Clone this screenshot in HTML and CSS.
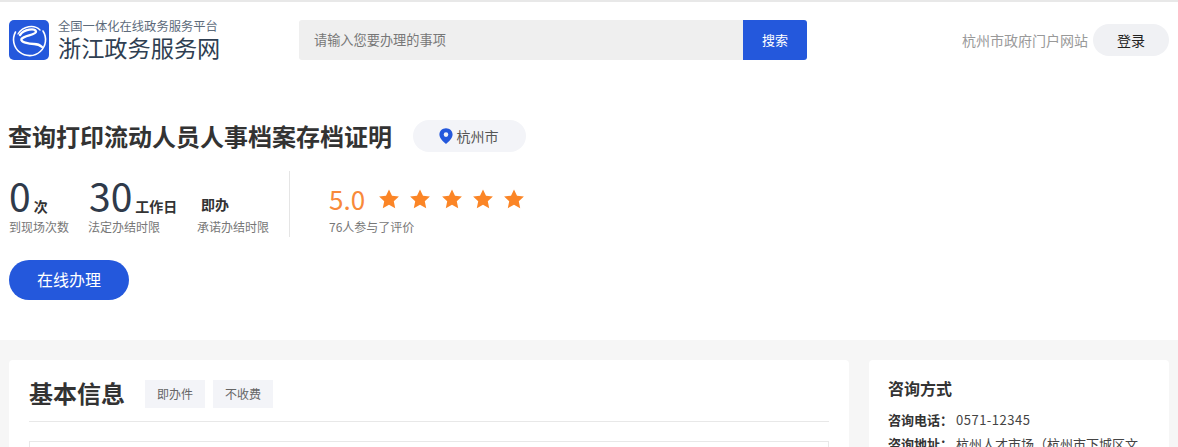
FILE: index.html
```html
<!DOCTYPE html>
<html lang="zh-CN">
<head>
<meta charset="utf-8">
<title>查询打印流动人员人事档案存档证明</title>
<link rel="stylesheet" href="styles.css">
</head>
<body>
<header class="topbar">
  <a class="brand">
    <svg class="brand-logo" viewBox="0 0 40 40" aria-hidden="true">
      <rect width="40" height="40" rx="5" fill="#2458dc"/>
      <path d="M6.500 12A16 16 0 1 0 34 11" fill="none" stroke="#fff" stroke-width="1.600" stroke-linecap="round"/>
      <path d="M9 14C14 6 25 4 31 10" fill="none" stroke="#fff" stroke-width="1.400" stroke-linecap="round"/>
      <path d="M11 15C15 9 26 8 27 11.500C27.500 15 15 15.500 12.500 19C11 22 20 24 25 24C29 24 31 25 33 27" fill="none" stroke="#fff" stroke-width="2.400" stroke-linecap="round" stroke-linejoin="round"/>
    </svg>
    <span class="brand-text">
      <span class="brand-sub">全国一体化在线政务服务平台</span>
      <span class="brand-name">浙江政务服务网</span>
    </span>
  </a>
  <form class="search">
    <span class="search-input">请输入您要办理的事项</span>
    <span class="search-btn">搜索</span>
  </form>
  <div class="top-right">
    <span class="portal">杭州市政府门户网站</span>
    <span class="login">登录</span>
  </div>
</header>

<section class="hero">
  <div class="title-row">
    <h1 class="title">查询打印流动人员人事档案存档证明</h1>
    <span class="city">
      <svg class="pin" viewBox="0 0 14 16" aria-hidden="true">
        <path fill-rule="evenodd" d="M7 0.300C3.200 0.300 0.400 3.100 0.400 6.500C0.400 10 4.200 13.800 7 16C9.800 13.800 13.600 10 13.600 6.500C13.600 3.100 10.800 0.300 7 0.300ZM7 4.300A2.300 2.300 0 1 1 7 8.900A2.300 2.300 0 1 1 7 4.300Z" fill="#2458dc"/>
      </svg>
      杭州市
    </span>
  </div>
  <div class="stats">
    <div class="stat stat-visits">
      <div class="stat-value"><span class="num">0</span><span class="unit">次</span></div>
      <div class="stat-label">到现场次数</div>
    </div>
    <div class="stat stat-legal">
      <div class="stat-value"><span class="num">30</span><span class="unit">工作日</span></div>
      <div class="stat-label">法定办结时限</div>
    </div>
    <div class="stat stat-promise">
      <div class="stat-value"><span class="unit unit-solo">即办</span></div>
      <div class="stat-label">承诺办结时限</div>
    </div>
    <div class="rating">
      <div class="rating-top">
        <span class="score">5.0</span>
        <span class="stars">
          <svg class="star" viewBox="0 0 20 20"><path d="M10 .4l3 6.300 6.900.9-5.100 4.700 1.400 6.900L10 15.800l-6.200 3.400 1.400-6.900L.1 7.600 7 6.700z"/></svg>
          <svg class="star" viewBox="0 0 20 20"><path d="M10 .4l3 6.300 6.900.9-5.100 4.700 1.400 6.900L10 15.800l-6.200 3.400 1.400-6.900L.1 7.600 7 6.700z"/></svg>
          <svg class="star" viewBox="0 0 20 20"><path d="M10 .4l3 6.300 6.900.9-5.100 4.700 1.400 6.900L10 15.800l-6.200 3.400 1.400-6.900L.1 7.600 7 6.700z"/></svg>
          <svg class="star" viewBox="0 0 20 20"><path d="M10 .4l3 6.300 6.900.9-5.100 4.700 1.400 6.900L10 15.800l-6.200 3.400 1.400-6.900L.1 7.600 7 6.700z"/></svg>
          <svg class="star" viewBox="0 0 20 20"><path d="M10 .4l3 6.300 6.900.9-5.100 4.700 1.400 6.900L10 15.800l-6.200 3.400 1.400-6.900L.1 7.600 7 6.700z"/></svg>
        </span>
      </div>
      <div class="stat-label">76人参与了评价</div>
    </div>
  </div>
  <a class="apply">在线办理</a>
</section>

<main class="content">
  <section class="card card-main">
    <div class="card-head">
      <h2 class="card-title">基本信息</h2>
      <span class="tag">即办件</span>
      <span class="tag">不收费</span>
    </div>
    <div class="info-table"></div>
  </section>
  <aside class="card card-side">
    <h3 class="side-title">咨询方式</h3>
    <dl class="contact">
      <div class="contact-row"><dt>咨询电话：</dt><dd class="phone">0571-12345</dd></div>
      <div class="contact-row"><dt>咨询地址：</dt><dd>杭州人才市场（杭州市下城区文</dd></div>
    </dl>
  </aside>
</main>
</body>
</html>
```
FILE: styles.css
```css
* { box-sizing: border-box; }
html, body { height: 447px; overflow: hidden; }
body {
  margin: 0;
  background: #fff;
  color: #333;
  font-family: "Noto Sans CJK SC", "Noto Sans", sans-serif;
  font-size: 14px;
}
.topbar {
  display: flex;
  align-items: center;
  height: 80px;
  padding: 0 9px 2px;
  border-top: 2px solid #e8e8e8;
}
.brand { display: flex; align-items: center; width: 290px; }
.brand-logo { width: 40px; height: 40px; flex: none; }
.brand-text { display: flex; flex-direction: column; margin-left: 9px; }
.brand-sub { font-size: 12.3px; line-height: 13px; color: #5d6b7b; }
.brand-name { font-size: 23.2px; line-height: 28px; color: #2f3f52; white-space: nowrap; }
.search { display: flex; width: 508px; height: 40px; }
.search-input {
  flex: 1;
  padding-left: 15px;
  font-size: 13.2px;
  line-height: 39px;
  color: #777;
  background: #efefef;
  border-radius: 3px 0 0 3px;
}
.search-btn {
  width: 64px;
  font-size: 13px;
  line-height: 39px;
  text-align: center;
  color: #fff;
  background: #2458dc;
  border-radius: 0 3px 3px 0;
}
.top-right { display: flex; align-items: center; margin-left: auto; }
.portal { color: #999; margin-right: 5px; }
.login {
  width: 76px;
  height: 32px;
  line-height: 32px;
  text-align: center;
  background: #f0f1f4;
  border-radius: 16px;
  color: #222;
}
.hero { height: 260px; padding: 40px 9px 0; }
.title-row { display: flex; align-items: center; height: 32px; }
.title { margin: 0 0 0 -1px; font-size: 24px; line-height: 32px; font-weight: 700; color: #333; }
.city {
  display: flex;
  align-items: center;
  justify-content: center;
  gap: 4px;
  width: 113px;
  height: 32px;
  margin-left: 21px;
  padding-right: 2px;
  background: #f3f4f8;
  border-radius: 16px;
  font-size: 14px;
  color: #555;
}
.pin { width: 14px; height: 16px; }
.stats { display: flex; align-items: flex-start; margin-top: 19px; height: 66px; }
.stat-value { display: flex; align-items: baseline; height: 48px; }
.num { font-size: 39px; line-height: 48px; color: #2f3a4a; }
.unit { font-size: 14px; font-weight: 700; color: #333; margin-left: 3px; }
.unit-solo { margin-left: 4px; line-height: 66px; }
.stat-label { font-size: 12px; line-height: 16px; color: #777; }
.stat-visits { width: 80px; }
.stat-legal { width: 108px; }
.stat-legal .stat-label { margin-left: -1px; }
.stat-promise { width: 92px; }
.rating { height: 66px; padding-left: 39px; border-left: 1px solid #e5e5e5; }
.rating-top { display: flex; align-items: center; height: 48px; padding-top: 8px; }
.score { font-size: 26px; color: #f8893a; line-height: 40px; }
.stars { display: flex; gap: 11.3px; margin-left: 14px; margin-top: 0; }
.star { width: 20px; height: 20px; fill: #fb8526; }
.apply {
  display: block;
  width: 120px;
  height: 40px;
  margin-top: 23px;
  line-height: 39px;
  text-align: center;
  font-size: 16px;
  color: #fff;
  background: #2458dc;
  border-radius: 20px;
}
.content {
  display: flex;
  align-items: flex-start;
  gap: 20px;
  height: 107px;
  padding: 20px 9px 0;
  background: #f6f6f6;
  overflow: hidden;
}
.card { background: #fff; border-radius: 4px; height: 200px; }
.card-main { width: 840px; padding: 20px 20px 0; }
.card-side { width: 300px; padding: 15px 19px 0; }
.card-head {
  display: flex;
  align-items: flex-start;
  height: 42px;
  border-bottom: 1px solid #e8e8e8;
}
.card-title { margin: -2px 20px 0 0; font-size: 24px; line-height: 30px; font-weight: 700; color: #333; }
.tag {
  width: 60px;
  height: 28px;
  margin-right: 8px;
  line-height: 28px;
  text-align: center;
  font-size: 12px;
  color: #666;
  background: #f3f4f8;
}
.info-table { height: 100px; margin-top: 19px; border: 1px solid #e8e8e8; }
.side-title { margin: 0; font-size: 16px; line-height: 26px; font-weight: 700; color: #333; }
.contact { margin: 7px 0 0; }
.contact-row { display: flex; line-height: 24px; font-size: 13px; white-space: nowrap; }
.contact-row dt { flex: none; font-weight: 700; width: 68px; color: #333; }
.contact-row dd { margin: 0; color: #444; }
.contact-row .phone { letter-spacing: 0.5px; }
```
